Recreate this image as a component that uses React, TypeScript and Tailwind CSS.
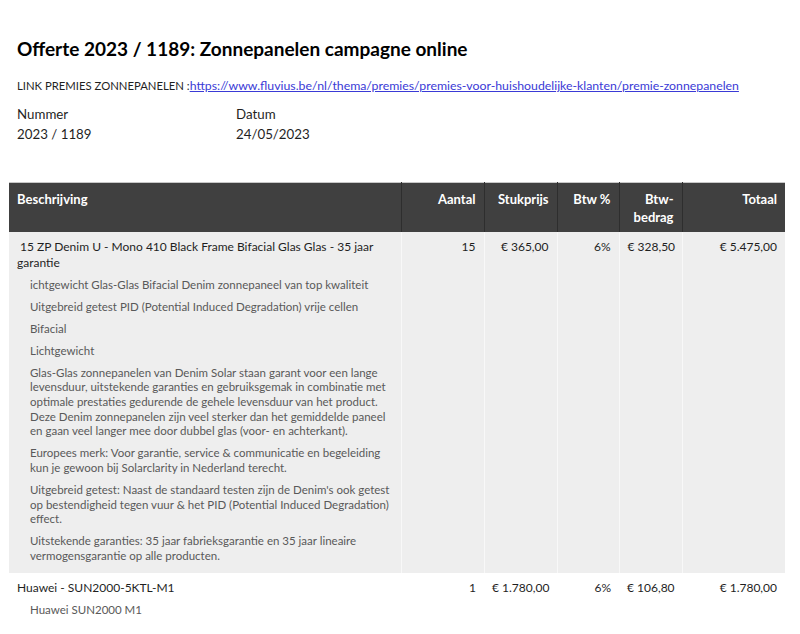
import React from 'react';

interface Line {
  title: string[];
  details: string[][];
  qty: string;
  price: string;
  vat: string;
  vatAmount: string;
  total: string;
  shaded?: boolean;
}

const lines: Line[] = [
  {
    title: ['\u00a015 ZP Denim U - Mono 410 Black Frame Bifacial Glas Glas - 35 jaar', 'garantie'],
    details: [
      ['ichtgewicht Glas-Glas Bifacial Denim zonnepaneel van top kwaliteit'],
      ['Uitgebreid getest PID (Potential Induced Degradation) vrije cellen'],
      ['Bifacial'],
      ['Lichtgewicht'],
      [
        'Glas-Glas zonnepanelen van Denim Solar staan garant voor een lange',
        'levensduur, uitstekende garanties en gebruiksgemak in combinatie met',
        'optimale prestaties gedurende de gehele levensduur van het product.',
        'Deze Denim zonnepanelen zijn veel sterker dan het gemiddelde paneel',
        'en gaan veel langer mee door dubbel glas (voor- en achterkant).',
      ],
      [
        'Europees merk: Voor garantie, service & communicatie en begeleiding',
        'kun je gewoon bij Solarclarity in Nederland terecht.',
      ],
      [
        "Uitgebreid getest: Naast de standaard testen zijn de Denim's ook getest",
        'op bestendigheid tegen vuur & het PID (Potential Induced Degradation)',
        'effect.',
      ],
      [
        'Uitstekende garanties: 35 jaar fabrieksgarantie en 35 jaar lineaire',
        'vermogensgarantie op alle producten.',
      ],
    ],
    qty: '15',
    price: '€ 365,00',
    vat: '6%',
    vatAmount: '€ 328,50',
    total: '€ 5.475,00',
    shaded: true,
  },
  {
    title: ['Huawei - SUN2000-5KTL-M1'],
    details: [['Huawei SUN2000 M1']],
    qty: '1',
    price: '€ 1.780,00',
    vat: '6%',
    vatAmount: '€ 106,80',
    total: '€ 1.780,00',
  },
];

const withBreaks = (parts: string[]) =>
  parts.map((text, i) => (
    <React.Fragment key={i}>
      {i > 0 && <br />}
      {text}
    </React.Fragment>
  ));

export default function App() {
  return (
    <div className="min-h-screen bg-white px-[9px] pt-[37px] font-['Lato',sans-serif] text-[#1f1f1f]">
      <h1 className="pl-2 text-[19px] font-bold leading-[24px] text-black">
        Offerte 2023 / 1189: Zonnepanelen campagne online
      </h1>

      <p className="mt-[18px] pl-2 text-[11.3px] leading-[14px] whitespace-nowrap">
        LINK PREMIES ZONNEPANELEN :
        <a href="#" className="text-[12.3px] text-[#3a3ad6] underline">
          https://www.fluvius.be/nl/thema/premies/premies-voor-huishoudelijke-klanten/premie-zonnepanelen
        </a>
      </p>

      <div className="mt-[11px] flex pl-2 text-[13.3px] leading-[20px]">
        <div className="w-[219px]">
          <div>Nummer</div>
          <div>2023 / 1189</div>
        </div>
        <div>
          <div>Datum</div>
          <div>24/05/2023</div>
        </div>
      </div>

      <table className="mt-[38px] w-[776px] table-fixed border-collapse">
        <colgroup>
          <col className="w-[392px]" />
          <col className="w-[83px]" />
          <col className="w-[73px]" />
          <col className="w-[62px]" />
          <col className="w-[63px]" />
          <col className="w-[103px]" />
        </colgroup>
        <thead>
          <tr className="h-[49px] border-t border-[#c8c8c8] bg-[#404040] align-top text-[13px] font-bold leading-[18px] text-white">
            <th className="px-2 pt-[7px] text-left">Beschrijving</th>
            <th className="border-l border-[#2e2e2e] px-2 pt-[7px] text-right">Aantal</th>
            <th className="border-l border-[#2e2e2e] px-2 pt-[7px] text-right">Stukprijs</th>
            <th className="border-l border-[#2e2e2e] px-2 pt-[7px] text-right">Btw %</th>
            <th className="border-l border-[#2e2e2e] px-2 pt-[7px] text-right">
              Btw-
              <br />
              bedrag
            </th>
            <th className="border-l border-[#2e2e2e] px-2 pt-[7px] text-right">Totaal</th>
          </tr>
        </thead>
        <tbody>
          {lines.map((line) => (
            <tr
              key={line.title[0]}
              className={`align-top text-[12px] leading-[16px] ${line.shaded ? 'bg-[#eeeeee]' : 'bg-white'}`}
            >
              <td className="px-2 pt-[7px] pb-[9px]">
                <div className="whitespace-nowrap text-[#1f1f1f]">{withBreaks(line.title)}</div>
                <div className="mt-[7px] flex flex-col gap-[7.5px] pl-[13px] text-[11.5px] leading-[14.6px] text-[#595959]">
                  {line.details.map((para, i) => (
                    <p key={i} className="whitespace-nowrap">
                      {withBreaks(para)}
                    </p>
                  ))}
                </div>
              </td>
              <td className={`whitespace-nowrap px-2 pt-[7px] text-right ${line.shaded ? 'border-l border-[#f8f8f8]' : ''}`}>{line.qty}</td>
              <td className={`whitespace-nowrap px-2 pt-[7px] text-right ${line.shaded ? 'border-l border-[#f8f8f8]' : ''}`}>{line.price}</td>
              <td className={`whitespace-nowrap px-2 pt-[7px] text-right ${line.shaded ? 'border-l border-[#f8f8f8]' : ''}`}>{line.vat}</td>
              <td className={`whitespace-nowrap px-2 pt-[7px] text-right ${line.shaded ? 'border-l border-[#f8f8f8]' : ''}`}>{line.vatAmount}</td>
              <td className={`whitespace-nowrap px-2 pt-[7px] text-right ${line.shaded ? 'border-l border-[#f8f8f8]' : ''}`}>{line.total}</td>
            </tr>
          ))}
        </tbody>
      </table>
    </div>
  );
}
